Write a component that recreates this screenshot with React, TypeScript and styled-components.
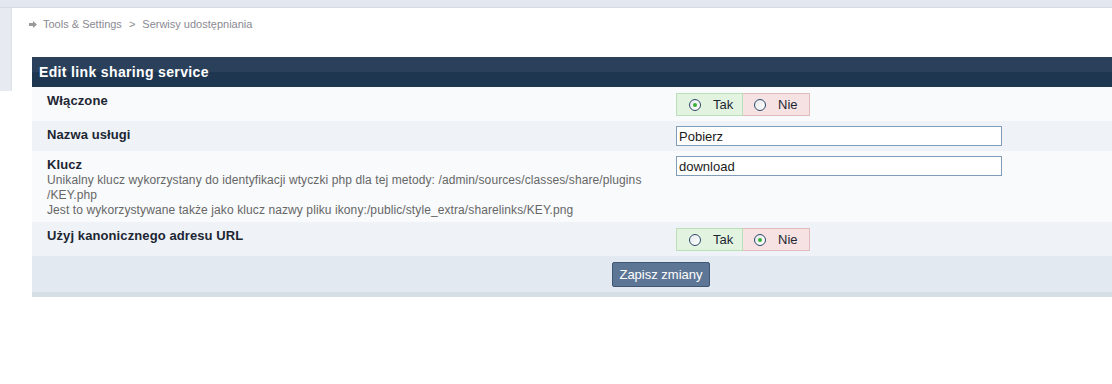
import React from 'react';
import styled, { createGlobalStyle } from 'styled-components';

const GlobalStyle = createGlobalStyle`
  html, body {
    margin: 0;
    padding: 0;
    background: #ffffff;
    overflow: hidden;
  }
  body {
    font-family: "Liberation Sans", Arial, sans-serif;
  }
`;

type Choice = 'yes' | 'no';

export default function App(): JSX.Element {
  return (
    <>
      <GlobalStyle />
      <TopBar />
      <Layout>
        <Sidebar />
        <Main>
          <Breadcrumb>
            <Arrow viewBox="0 0 8 7" aria-hidden="true">
              <path d="M0 2h4V0l4 3.5-4 3.5V5H0z" />
            </Arrow>
            <span>Tools &amp; Settings</span>
            <Sep>&gt;</Sep>
            <span>Serwisy udostępniania</span>
          </Breadcrumb>

          <Panel>
            <PanelTitle>Edit link sharing service</PanelTitle>

            <Row $alt={false}>
              <LabelCell>
                <Label>Włączone</Label>
              </LabelCell>
              <FieldCell>
                <YesNo value="yes" />
              </FieldCell>
            </Row>

            <Row $alt>
              <LabelCell>
                <Label>Nazwa usługi</Label>
              </LabelCell>
              <FieldCell>
                <TextInput defaultValue="Pobierz" />
              </FieldCell>
            </Row>

            <Row $alt={false}>
              <LabelCell>
                <Label>Klucz</Label>
                <Desc>
                  Unikalny klucz wykorzystany do identyfikacji wtyczki php dla tej metody: /admin/sources/classes/share/plugins
                  <br />
                  /KEY.php
                  <br />
                  Jest to wykorzystywane także jako klucz nazwy pliku ikony:/public/style_extra/sharelinks/KEY.png
                </Desc>
              </LabelCell>
              <FieldCell>
                <TextInput defaultValue="download" />
              </FieldCell>
            </Row>

            <Row $alt>
              <LabelCell>
                <Label>Użyj kanonicznego adresu URL</Label>
              </LabelCell>
              <FieldCell>
                <YesNo value="no" />
              </FieldCell>
            </Row>

            <Footer>
              <SaveButton type="button">Zapisz zmiany</SaveButton>
            </Footer>
          </Panel>
        </Main>
      </Layout>
    </>
  );
}

function YesNo({ value }: { value: Choice }): JSX.Element {
  return (
    <Toggle>
      <Option $tone="yes">
        <Radio $checked={value === 'yes'} />
        Tak
      </Option>
      <Option $tone="no">
        <Radio $checked={value === 'no'} />
        Nie
      </Option>
    </Toggle>
  );
}

const TopBar = styled.div`
  height: 7px;
  background: #e3e8f0;
  border-bottom: 1px solid #d4dbe4;
`;

const Layout = styled.div`
  display: flex;
  align-items: flex-start;
`;

const Sidebar = styled.div`
  width: 11px;
  height: 83px;
  flex-shrink: 0;
  background: #e7ebf1;
  border-right: 1px solid #dde3ea;
`;

const Main = styled.div`
  flex: 1;
  padding-left: 17px;
  min-width: 0;
`;

const Breadcrumb = styled.div`
  display: flex;
  align-items: center;
  gap: 6px;
  padding-top: 9px;
  height: 14px;
  margin-bottom: 26px;
  font-size: 11px;
  color: #8a8a92;
`;

const Arrow = styled.svg`
  width: 8px;
  height: 7px;
  fill: #9a9a9a;
`;

const Sep = styled.span`
  padding: 0 1px;
`;

const Panel = styled.div`
  width: 1258px;
  margin-left: 3px;
  border-bottom: 5px solid #d5dde5;
`;

const PanelTitle = styled.div`
  height: 30px;
  line-height: 30px;
  padding-left: 7px;
  background: linear-gradient(to bottom, #2b415b 0, #2b415b 50%, #1f3651 50%, #1f3651 100%);
  color: #ffffff;
  font-size: 14px;
  font-weight: bold;
  letter-spacing: 0.35px;
`;

const Row = styled.div<{ $alt: boolean }>`
  display: grid;
  grid-template-columns: 644px 1fr;
  background: ${(p) => (p.$alt ? '#eff3f7' : '#f8fafc')};
`;

const LabelCell = styled.div`
  padding: 6px 15px 4px 15px;
`;

const FieldCell = styled.div`
  padding: 5px 0 5px 0;
`;

const Label = styled.div`
  font-size: 13px;
  font-weight: bold;
  line-height: 16px;
  color: #1d2633;
  letter-spacing: 0.1px;
`;

const Desc = styled.div`
  font-size: 12px;
  line-height: 15px;
  color: #666666;
  letter-spacing: 0.1px;
`;

const TextInput = styled.input`
  box-sizing: border-box;
  width: 326px;
  height: 20px;
  padding: 0 2px;
  border: 1px solid #7f9db9;
  background: #ffffff;
  font-family: "Liberation Sans", Arial, sans-serif;
  font-size: 13px;
  color: #1a1a1a;
  outline: none;
`;

const Toggle = styled.div`
  display: inline-flex;
  margin-top: 1px;
`;

const Option = styled.label<{ $tone: 'yes' | 'no' }>`
  box-sizing: border-box;
  display: flex;
  align-items: center;
  gap: 12px;
  width: 67px;
  height: 23px;
  padding-left: ${(p) => (p.$tone === 'yes' ? '12px' : '11px')};
  font-size: 13px;
  color: #1d2633;
  background: ${(p) => (p.$tone === 'yes' ? '#e2f4e0' : '#f6e2e2')};
  border: 1px solid ${(p) => (p.$tone === 'yes' ? '#bbe0b8' : '#e2bcbc')};
  border-left-width: ${(p) => (p.$tone === 'yes' ? '1px' : '0')};
`;

const Radio = styled.span<{ $checked: boolean }>`
  box-sizing: border-box;
  position: relative;
  width: 12px;
  height: 12px;
  border-radius: 50%;
  border: 1px solid #2f4a6b;
  background: linear-gradient(135deg, #e6e8ec, #ffffff);
  flex-shrink: 0;

  &::after {
    content: '';
    display: ${(p) => (p.$checked ? 'block' : 'none')};
    position: absolute;
    left: 3px;
    top: 3px;
    width: 4px;
    height: 4px;
    border-radius: 50%;
    background: #37b037;
  }
`;

const Footer = styled.div`
  display: flex;
  justify-content: center;
  padding: 6px 0 5px 0;
  background: #e3e9f0;
`;

const SaveButton = styled.button`
  height: 25px;
  padding: 0 6px;
  border: 1px solid #3f5675;
  border-radius: 2px;
  background: #5e7695;
  color: #ffffff;
  font-family: "Liberation Sans", Arial, sans-serif;
  font-size: 13px;
  cursor: pointer;
`;
